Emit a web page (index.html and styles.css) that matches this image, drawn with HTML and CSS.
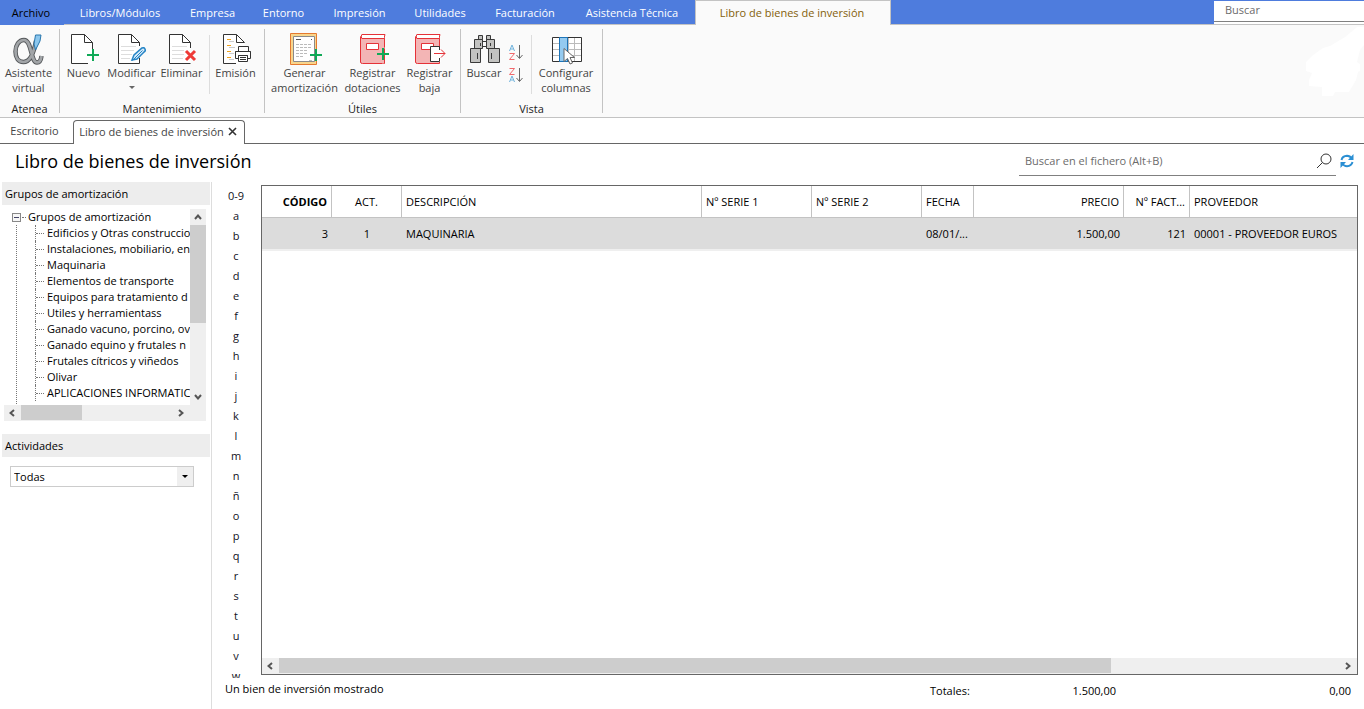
FILE: index.html
```
<!DOCTYPE html>
<html lang="es">
<head>
<meta charset="utf-8">
<title>Libro de bienes de inversión</title>
<link rel="stylesheet" href="styles.css">
</head>
<body>
<div class="app">
  <header class="menubar">
    <nav class="menu">
      <button class="menu-item file" type="button">Archivo</button>
      <button class="menu-item" type="button">Libros/Módulos</button>
      <button class="menu-item" type="button">Empresa</button>
      <button class="menu-item" type="button">Entorno</button>
      <button class="menu-item" type="button">Impresión</button>
      <button class="menu-item" type="button">Utilidades</button>
      <button class="menu-item" type="button">Facturación</button>
      <button class="menu-item" type="button">Asistencia Técnica</button>
      <button class="menu-item active" type="button">Libro de bienes de inversión</button>
    </nav>
    <div class="menu-search"><input class="menu-search-input" type="text" placeholder="Buscar" aria-label="Buscar"></div>
  </header>

  <section class="ribbon">
    <div class="group g-atenea">
      <div class="tools">
        <button class="tool" type="button">
          <svg class="icon" viewBox="0 0 32 32"><g fill="none"><path d="M24 8C22 19 18 29 11.500 29C6 29 3.500 24.500 3.500 18.500C3.500 12 7 7 12 7C20 7 18.500 29.500 25 29.500C27.500 29.500 29 27 29.500 23" stroke="#55585b" stroke-width="4.500"/><path d="M24 8C22 19 18 29 11.500 29C6 29 3.500 24.500 3.500 18.500C3.500 12 7 7 12 7C20 7 18.500 29.500 25 29.500C27.500 29.500 29 27 29.500 23" stroke="#a2a5a8" stroke-width="2.700"/></g><path d="M23.500 2h5.500l-1 6-4.500 9-1.500-6z" fill="#8cc7ee" stroke="#2876ad"/></svg>
          <span class="label">Asistente<br>virtual</span>
        </button>
      </div>
      <div class="caption">Atenea</div>
    </div>

    <div class="group g-mant">
      <div class="tools">
        <button class="tool w48" type="button">
          <svg class="icon" viewBox="0 0 32 32"><path d="M3.500 1.500h13l8 8v21h-21z" fill="#fff"/><path d="M20 30.500H3.500v-29h13l8 8V17M16.500 1.500v8h8" fill="none" stroke="#333"/><path d="M25 16v12M19 22h12" stroke="#10a957" stroke-width="2"/></svg>
          <span class="label">Nuevo</span>
        </button>
        <button class="tool w48" type="button">
          <svg class="icon" viewBox="0 0 32 32"><path d="M2.500 1.500h13l8 8v21h-21z" fill="#fff"/><path d="M5 13.500h15M5 17.500h13M5 21.500h11M5 25.500h9" stroke="#ddd"/><path d="M23.500 13V9.500l-8-8h-13v29h21V25M15.500 1.500v8h8" fill="none" stroke="#333"/><path d="M16 27l2-5 8-7q2-1 3 1t-1 3l-7 7z" fill="#d5ebfa" stroke="#2584c6" stroke-width="1.500"/><path d="M16.500 27.500l10-10" stroke="#2584c6"/></svg>
          <span class="label">Modificar</span>
          <span class="drop"></span>
        </button>
        <button class="tool w52" type="button">
          <svg class="icon" viewBox="0 0 32 32"><path d="M3.500 1.500h13l8 8v21h-21z" fill="#fff"/><path d="M6 13.500h15M6 17.500h12M6 21.500h12M6 25.500h11" stroke="#ddd"/><path d="M24.500 15V9.500l-8-8h-13v29h21M16.500 1.500v8h8" fill="none" stroke="#333"/><path d="M20 18l9 9M29 18l-9 9" stroke="#ee3a37" stroke-width="3"/></svg>
          <span class="label">Eliminar</span>
        </button>
        <span class="sep"></span>
        <button class="tool w54" type="button">
          <svg class="icon" viewBox="0 0 32 32"><path d="M3.500 1.500h13l8 8v21h-21z" fill="#fff"/><path d="M16 30.500H3.500v-29h13l8 8M16.500 1.500v8h8" fill="none" stroke="#333"/><path d="M7 6.500h4M7 12.500h4M7 18.500h4M7 24.500h4" stroke="#f0a21c"/><path d="M9 8.500h5M9 14.500h6M9 20.500h5M9 26.500h5" stroke="#ccc"/><path d="M18.500 18.500v-5h10v5h2v7h-3v-3h-9v3h-3v-7z" fill="#fff" stroke="#333"/><path d="M15.500 18.500h15" stroke="#333"/><path d="M18.500 22.500h9v6h-9zM20 24.500h6M20 26.500h6" fill="#fff" stroke="#333"/></svg>
          <span class="label">Emisión</span>
        </button>
      </div>
      <div class="caption">Mantenimiento</div>
    </div>

    <div class="group g-util">
      <div class="tools">
        <button class="tool w80" type="button">
          <svg class="icon" viewBox="0 0 32 32"><path d="M1.500.500h26v31h-26z" fill="#f8d58c" stroke="#e5792f"/><path d="M4.500 3.500h21v25h-21z" fill="#fff" stroke="#8a8a8a"/><path d="M7 6.500h5M22 6.500h1" stroke="#555"/><path d="M7 11.500h16M7 14.500h16M7 17.500h12M7 20.500h12M7 23.500h8M20 27.500h4" stroke="#bbb" stroke-dasharray="3 1"/><path d="M27 16v12M21 22h12" stroke="#10a957" stroke-width="2"/></svg>
          <span class="label">Generar<br>amortización</span>
        </button>
        <button class="tool w56" type="button">
          <svg class="icon" viewBox="0 0 32 32"><path d="M3.500 4v25q0 1.500 2 1.500h22v-25H5q-2-2 0-4h23l-1 4" fill="#f3b5b5" stroke="#e53238"/><path d="M5 2h22v3H5z" fill="#fff"/><path d="M27.500 1.500H5q-2 2 0 4h22.500M9.500 10.500h12v6h-12z" fill="none" stroke="#e53238"/><path d="M10 11h11v5H10z" fill="#fff"/><path d="M23 24h3M26 15h2M26 28v3" stroke="#f3b5b5"/><path d="M26 15v12M20 21h12" stroke="#10a957" stroke-width="2"/></svg>
          <span class="label">Registrar<br>dotaciones</span>
        </button>
        <button class="tool w58" type="button">
          <svg class="icon" viewBox="0 0 32 32"><path d="M1.500 4v25q0 1.500 2 1.500h22v-25H3q-2-2 0-4h23l-1 4" fill="#f3b5b5" stroke="#e53238"/><path d="M3 2h22v3H3z" fill="#fff"/><path d="M25.500 1.500H3q-2 2 0 4h22.500M7.500 10.500h12v6h-12z" fill="none" stroke="#e53238"/><path d="M8 11h11v5H8z" fill="#fff"/><path d="M17 14h10v15H17z" fill="#fff"/><path d="M25.500 17v-3.500h-9v15h9V25" fill="none" stroke="#333"/><path d="M20 20.500h11M27 16.500l4 4-4 4" fill="none" stroke="#e53238"/></svg>
          <span class="label">Registrar<br>baja</span>
        </button>
      </div>
      <div class="caption">Útiles</div>
    </div>

    <div class="group g-vista">
      <div class="tools">
        <button class="tool w48" type="button">
          <svg class="icon" viewBox="0 0 32 32"><g fill="#c3c3c1" stroke="#3a3a3a"><path d="M10.500 2.500h4v4h-4zM18.500 2.500h4v4h-4zM6.500 6.500h8v9h-8zM18.500 6.500h8v9h-8zM2.500 15.500h10v14h-10zM20.500 15.500h11v14h-11z"/></g><path d="M15 8.500h3M15 13.500h3M12.500 10v3M22.500 10v3M9.500 20v6M23.500 20v6" stroke="#3a3a3a"/></svg>
          <span class="label">Buscar</span>
        </button>
        <div class="sorts">
          <button class="sort" type="button" aria-label="Orden ascendente"><svg width="16" height="17" viewBox="0 0 16 17"><path d="M.500 7l2.500-6 2.500 6M1.500 5h3" fill="none" stroke="#6fb2dc"/><path d="M.500 9.500h5l-5 6h5" fill="none" stroke="#f0686c"/><path d="M10.500 1v13M7.500 11l3 3.500 3-3.500" fill="none" stroke="#666"/></svg></button>
          <button class="sort" type="button" aria-label="Orden descendente"><svg width="16" height="17" viewBox="0 0 16 17"><path d="M.500 1.500h5l-5 6h5" fill="none" stroke="#f0686c"/><path d="M.500 15l2.500-6 2.500 6M1.500 13h3" fill="none" stroke="#6fb2dc"/><path d="M10.500 1v13M7.500 11l3 3.500 3-3.500" fill="none" stroke="#666"/></svg></button>
        </div>
        <span class="sep"></span>
        <button class="tool w70" type="button">
          <svg class="icon" viewBox="0 0 32 32"><path d="M2.500 4.500h29v24h-29z" fill="#fff"/><path d="M3 10.500h28M3 16.500h28M3 22.500h28M18.500 5v23M24.500 5v23" stroke="#bbb"/><path d="M2.500 4.500h29v24h-29z" fill="none" stroke="#333"/><path d="M9.500 4.500h8v24h-8z" fill="#94caf0" stroke="#1d74b8"/><path d="M14 15.500v13l3.500-3 2.500 5.500 2.500-1-2.500-5.500h4.500z" fill="#fff" stroke="#666"/></svg>
          <span class="label">Configurar<br>columnas</span>
        </button>
      </div>
      <div class="caption">Vista</div>
    </div>
    <svg class="splash" width="58" height="70" viewBox="0 0 58 70"><path d="M51 1L39 11 24 20 17 22 7 29 0 36v9l6 2-3 7v6l13 1v9h11l2-4h14l7-12 2-8 2-1v-7l-3-2 3-12 4-5V1z" fill="#fff"/></svg>
  </section>

  <nav class="doc-tabs">
    <button class="doc-tab" type="button">Escritorio</button>
    <div class="doc-tab current"><span>Libro de bienes de inversión</span><button class="close" type="button" aria-label="Cerrar"><svg width="9" height="9" viewBox="0 0 9 9"><path d="M1 1l7 7M8 1L1 8" stroke="#333" stroke-width="1.600"/></svg></button></div>
    <span class="tab-fill"></span>
  </nav>

  <div class="title-row">
    <h1 class="title">Libro de bienes de inversión</h1>
    <div class="file-search">
      <input class="file-search-input" type="text" placeholder="Buscar en el fichero (Alt+B)" aria-label="Buscar en el fichero">
      <button class="icon-btn" type="button" aria-label="Buscar"><svg width="16" height="16" viewBox="0 0 16 16"><circle cx="10" cy="6" r="5" fill="none" stroke="#333"/><path d="M6.500 9.500L1 15" stroke="#333"/></svg></button>
    </div>
    <button class="icon-btn refresh" type="button" aria-label="Actualizar"><svg width="14" height="14" viewBox="0 0 14 14"><path d="M1.500 6Q2.500 2 7 1.800q3 0 5 3M12.500 8Q11.500 12 7 12.200q-3 0-5-3" fill="none" stroke="#2b8fd3" stroke-width="2"/><path d="M13.500 0v6H8zM.500 14V8H6z" fill="#2b8fd3"/></svg></button>
  </div>

  <main class="main">
    <aside class="side">
      <h2 class="side-head">Grupos de amortización</h2>
      <div class="tree-box">
        <div class="tree">
          <div class="root"><button class="toggle" type="button" aria-label="Contraer"></button><span class="dots"></span><span>Grupos de amortización</span></div>
          <ul class="branch">
            <li class="node">Edificios y Otras construccio</li>
            <li class="node">Instalaciones, mobiliario, en</li>
            <li class="node">Maquinaria</li>
            <li class="node">Elementos de transporte</li>
            <li class="node">Equipos para tratamiento d</li>
            <li class="node">Utiles y herramientass</li>
            <li class="node">Ganado vacuno, porcino, ov</li>
            <li class="node">Ganado equino y frutales n</li>
            <li class="node">Frutales cítricos y viñedos</li>
            <li class="node">Olivar</li>
            <li class="node">APLICACIONES INFORMATIC</li>
          </ul>
        </div>
        <div class="vbar">
          <button class="arrow" type="button" aria-label="Arriba"><svg width="8" height="6" viewBox="0 0 8 6"><path d="M1 5l3-3.500L7 5" fill="none" stroke="#555" stroke-width="2"/></svg></button>
          <span class="vthumb"></span>
          <button class="arrow down" type="button" aria-label="Abajo"><svg width="8" height="6" viewBox="0 0 8 6"><path d="M1 1l3 3.500L7 1" fill="none" stroke="#555" stroke-width="2"/></svg></button>
        </div>
        <div class="hbar tree-hbar">
          <button class="arrow" type="button" aria-label="Izquierda"><svg width="6" height="8" viewBox="0 0 6 8"><path d="M5 1L1.500 4 5 7" fill="none" stroke="#555" stroke-width="2"/></svg></button>
          <span class="hthumb"></span>
          <button class="arrow right" type="button" aria-label="Derecha"><svg width="6" height="8" viewBox="0 0 6 8"><path d="M1 1l3.500 3L1 7" fill="none" stroke="#555" stroke-width="2"/></svg></button>
        </div>
      </div>
      <label class="side-head" for="act">Actividades</label>
      <div class="select-wrap">
        <select class="select" id="act"><option>Todas</option></select>
        <span class="select-arrow"></span>
      </div>
    </aside>

    <section class="content">
      <div class="work">
        <nav class="letters">
          <button class="letter" type="button">0-9</button><button class="letter" type="button">a</button><button class="letter" type="button">b</button><button class="letter" type="button">c</button><button class="letter" type="button">d</button><button class="letter" type="button">e</button><button class="letter" type="button">f</button><button class="letter" type="button">g</button><button class="letter" type="button">h</button><button class="letter" type="button">i</button><button class="letter" type="button">j</button><button class="letter" type="button">k</button><button class="letter" type="button">l</button><button class="letter" type="button">m</button><button class="letter" type="button">n</button><button class="letter" type="button">ñ</button><button class="letter" type="button">o</button><button class="letter" type="button">p</button><button class="letter" type="button">q</button><button class="letter" type="button">r</button><button class="letter" type="button">s</button><button class="letter" type="button">t</button><button class="letter" type="button">u</button><button class="letter" type="button">v</button><button class="letter" type="button">w</button>
        </nav>
        <div class="grid-box">
          <div class="grid-scroll">
            <table class="grid">
              <colgroup><col class="c70"><col class="c70"><col class="c300"><col class="c110"><col class="c110"><col class="c52"><col class="c150"><col class="c66"><col></colgroup>
              <thead><tr><th class="num key">CÓDIGO</th><th class="mid">ACT.</th><th>DESCRIPCIÓN</th><th>Nº SERIE 1</th><th>Nº SERIE 2</th><th>FECHA</th><th class="num">PRECIO</th><th class="num">Nº FACT...</th><th>PROVEEDOR</th></tr></thead>
              <tbody><tr><td class="num">3</td><td class="mid">1</td><td>MAQUINARIA</td><td></td><td></td><td>08/01/...</td><td class="num">1.500,00</td><td class="num">121</td><td>00001 - PROVEEDOR EUROS</td></tr></tbody>
            </table>
          </div>
          <div class="hbar">
            <button class="arrow" type="button" aria-label="Izquierda"><svg width="6" height="8" viewBox="0 0 6 8"><path d="M5 1L1.500 4 5 7" fill="none" stroke="#555" stroke-width="2"/></svg></button>
            <span class="hthumb wide"></span>
            <button class="arrow right" type="button" aria-label="Derecha"><svg width="6" height="8" viewBox="0 0 6 8"><path d="M1 1l3.500 3L1 7" fill="none" stroke="#555" stroke-width="2"/></svg></button>
          </div>
        </div>
      </div>
      <footer class="status">
        <span class="count">Un bien de inversión mostrado</span>
        <span class="total-label">Totales:</span>
        <span class="total">1.500,00</span>
        <span class="total">0,00</span>
      </footer>
    </section>
  </main>
</div>
</body>
</html>
```
FILE: styles.css
```
* { box-sizing: border-box; }
body { margin: 0; background: #fff; color: #000; font: 11px/15px "Open Sans", "Noto Sans", sans-serif; }
button, input, select { font: inherit; color: inherit; border: 0; background: none; padding: 0; margin: 0; border-radius: 0; }
svg { display: block; }
.app { height: 100vh; display: flex; flex-direction: column; overflow: hidden; }

/* Menu bar */
.menubar { display: flex; justify-content: space-between; height: 25px; flex: none; background: #4e7cdd; border-bottom: 1px solid #c3c3c3; }
.menu { display: grid; grid-template-columns: 64px 114px 71px 71px 81px 80px 90px 124px 196px; height: 25px; }
.menu-item { color: #fff; padding: 0 2px 1px 0; white-space: nowrap; }
.menu-item.file { color: #000; background: #4e7cdd; }
.menu-item.active { color: #84600a; background: #fafafa; border: 1px solid #c3c3c3; border-bottom: 0; }
.menu-search { width: 150px; margin-top: 1px; background: #fff; }
.menu-search-input { width: 100%; height: 21px; padding: 0 11px 3px; border-bottom: 1px solid #808080; outline: 0; }
::placeholder { color: #6b6b6b; opacity: 1; }

/* Ribbon */
.ribbon { position: relative; display: flex; flex: none; height: 93px; background: #fafafa; border-bottom: 1px solid #c3c3c3; color: #444; }
.group { display: flex; flex-direction: column; justify-content: space-between; margin: 4px 0; border-right: 1px solid #c3c3c3; }
.g-atenea { width: 60px; }
.g-mant { width: 205px; }
.g-util { width: 196px; }
.g-vista { width: 142px; }
.tools { display: flex; justify-content: center; height: 72px; }
.tool { display: flex; flex-direction: column; align-items: center; justify-content: flex-start; padding: 4px 2px 0 0; white-space: nowrap; }
.icon { width: 32px; height: 32px; flex: none; overflow: visible; }
.label { text-align: center; }
.drop { border: 3px solid transparent; border-top-color: #666; margin-top: 6px; }
.w48 { width: 48px; }
.w52 { width: 52px; }
.w54 { width: 54px; }
.w56 { width: 56px; }
.w58 { width: 58px; }
.w70 { width: 70px; }
.w80 { width: 80px; }
.sep { width: 1px; height: 59px; margin-top: 6px; background: #ddd; }
.sorts { display: flex; flex-direction: column; gap: 6px; width: 22px; padding-top: 15px; }
.caption { text-align: center; color: #222; height: 15px; margin-bottom: -3px; }
.splash { position: absolute; right: 0; top: 1px; }

/* Document tabs */
.doc-tabs { display: flex; align-items: stretch; flex: none; height: 26px; padding-top: 2px; }
.doc-tab { width: 73px; border-bottom: 1px solid #666; padding: 0 4px 2px 0; color: #444; white-space: nowrap; }
.doc-tab.current { display: flex; align-items: center; justify-content: center; gap: 4px; width: 172px; padding: 0 2px 2px 0; border: 1px solid #666; border-bottom: 0; border-radius: 4px 4px 0 0; }
.tab-fill { flex: 1; border-bottom: 1px solid #666; }

/* Title row */
.title-row { display: flex; align-items: center; flex: none; height: 38px; padding: 0 10px 4px 15px; }
.title { flex: 1; margin: 0; font-size: 18px; line-height: 24px; font-weight: 400; }
.file-search { display: flex; align-items: center; width: 317px; height: 30px; padding-right: 4px; border-bottom: 1px solid #808080; }
.file-search-input { flex: 1; min-width: 0; padding-left: 6px; outline: 0; }
.refresh { margin-left: 4px; }

/* Side panel */
.main { display: flex; flex: 1; min-height: 0; }
.side { width: 212px; flex: none; border-right: 1px solid #ddd; }
.side-head { display: block; margin: 0 1px 0 2px; height: 23px; padding: 0 3px; line-height: 23px; font-size: 11px; font-weight: 400; background: #ededed; }
.tree-box { display: grid; grid-template: 196px 16px / 1fr 16px; margin: 4px 5px 13px 4px; }
.tree { overflow: hidden; white-space: nowrap; line-height: 16px; }
.root { display: flex; align-items: center; padding-left: 8px; }
.toggle { width: 9px; height: 9px; border: 1px solid #888; background: linear-gradient(#446, #446) center / 5px 1px no-repeat #f6f6f6; }
.dots { width: 4px; margin: 0 2px 0 1px; border-top: 1px dotted #777; }
.branch { list-style: none; margin: 0 0 0 12px; padding: 0 0 3px 18px; border-left: 1px dotted #777; }
.node { display: flex; align-items: center; gap: 3px; height: 16px; border-left: 1px dotted #777; }
.node::before { content: ""; width: 8px; border-top: 1px dotted #777; flex: none; }
.vbar { display: flex; flex-direction: column; background: #efefef; }
.arrow { display: flex; align-items: center; justify-content: center; width: 17px; height: 16px; padding-right: 1px; flex: none; }
.vbar .arrow { width: 16px; }
.vthumb { height: 98px; background: #cdcdcd; }
.down { margin-top: auto; }
.hbar { display: flex; height: 16px; background: #efefef; }
.tree-hbar { grid-column: 1 / 3; padding-right: 16px; }
.hthumb { width: 61px; height: 15px; background: #cdcdcd; }
.hthumb.wide { width: 76%; }
.right { margin-left: auto; }
.select-wrap { position: relative; margin: 9px 17px 0 10px; }
.select { appearance: none; display: block; width: 100%; height: 21px; padding: 0 3px; border: 1px solid #ccc; background: linear-gradient(#efefef, #efefef) right / 16px 100% no-repeat #fff; }
.select-arrow { position: absolute; right: 6px; top: 9px; border: 3px solid transparent; border-top-color: #000; pointer-events: none; }

/* Grid */
.content { flex: 1; min-width: 0; display: flex; flex-direction: column; }
.work { flex: 1; min-height: 0; display: flex; padding: 3px 6px 0 0; }
.letters { width: 49px; flex: none; overflow: hidden; display: flex; flex-direction: column; margin-bottom: -3px; }
.letter { flex: none; height: 20px; padding-right: 1px; color: #112; }
.grid-box { flex: 1; min-width: 0; display: flex; flex-direction: column; border: 1px solid #666; }
.grid-scroll { flex: 1; min-height: 0; overflow: hidden; }
.grid { width: 100%; table-layout: fixed; border-collapse: separate; border-spacing: 0; }
.grid th, .grid td { padding: 0 4px; text-align: left; font-weight: 400; white-space: nowrap; overflow: hidden; text-overflow: ellipsis; }
.grid th { height: 32px; border-right: 1px solid #c3c3c3; border-bottom: 1px solid #c3c3c3; }
.grid th:last-child { border-right: 0; }
.grid td { height: 33px; background: #dcdcdc; border-bottom: 2px solid #efefef; }
.grid .num { text-align: right; }
.grid .mid { text-align: center; }
.grid .key { font-weight: 700; }
.c70 { width: 70px; }
.c300 { width: 300px; }
.c110 { width: 110px; }
.c52 { width: 52px; }
.c150 { width: 150px; }
.c66 { width: 66px; }
.status { display: flex; flex: none; height: 34px; padding: 6px 13px 0; }
.count { flex: 1; }
.total-label { width: 50px; padding-top: 2px; }
.total { width: 136px; padding-top: 2px; text-align: right; }
.total:last-child { width: 235px; }
```
